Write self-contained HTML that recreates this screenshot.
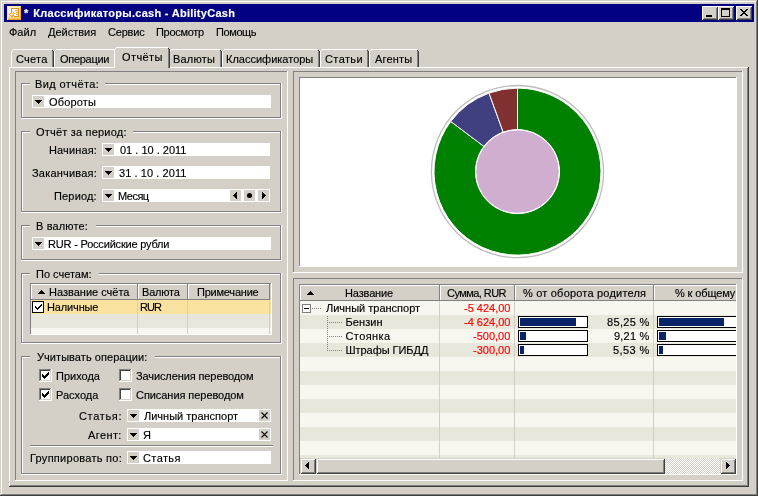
<!DOCTYPE html>
<html><head><meta charset="utf-8"><title>AbilityCash</title><style>
html,body{margin:0;padding:0}
body{width:758px;height:496px;position:relative;overflow:hidden;background:#d4d0c8;font:11px "Liberation Sans",sans-serif;color:#000}
i,div,svg,.t{position:absolute;display:block}
#root{left:0;top:0;width:758px;height:496px;will-change:transform}
.t{white-space:nowrap;line-height:13px;height:13px;-webkit-text-stroke:0.15px currentColor}
.b{font-weight:bold}.w{color:#fff}.r{color:#f00}
.btn{box-sizing:border-box;background:#d4d0c8;box-shadow:inset 1px 1px 0 #fff,inset -1px -1px 0 #404040,inset 2px 2px 0 #d4d0c8,inset -2px -2px 0 #808080}
.sbtn{box-sizing:border-box;background:#d4d0c8;box-shadow:inset 1px 1px 0 #d4d0c8,inset -1px -1px 0 #404040,inset 2px 2px 0 #fff,inset -2px -2px 0 #808080}
.dh{background:repeating-linear-gradient(to right,#808080 0,#808080 1px,transparent 1px,transparent 2px)}
.dv{background:repeating-linear-gradient(to bottom,#808080 0,#808080 1px,transparent 1px,transparent 2px)}
.chk{background:repeating-conic-gradient(#fff 0% 25%,#d4d0c8 0% 50%) 0 0/2px 2px}
</style></head><body>
<div id="root">
<i style="left:1px;top:1px;width:756px;height:1px;background:#fff;"></i>
<i style="left:1px;top:1px;width:1px;height:493px;background:#fff;"></i>
<i style="left:757px;top:0px;width:1px;height:496px;background:#404040;"></i>
<i style="left:0px;top:495px;width:758px;height:1px;background:#404040;"></i>
<i style="left:756px;top:1px;width:1px;height:494px;background:#808080;"></i>
<i style="left:1px;top:494px;width:756px;height:1px;background:#808080;"></i>
<i style="left:4px;top:4px;width:750px;height:18px;background:#000080;"></i>
<svg style="left:7px;top:6px" width="14" height="14" viewBox="0 0 14 14" shape-rendering="crispEdges"><defs><linearGradient id="ig" x1="0" y1="0" x2="0" y2="1"><stop offset="0" stop-color="#fdeab0"/><stop offset=".2" stop-color="#fffaf0"/><stop offset=".7" stop-color="#fdebc8"/><stop offset="1" stop-color="#f5ae30"/></linearGradient></defs><rect width="14" height="14" fill="url(#ig)"/><path d="M0 0h14v1h-13v13h-1z" fill="#ffe88c"/><path d="M14 1v13h-13v-1h12v-12z" fill="#f5a81e"/><rect x="4" y="2" width="8" height="9" fill="#e98c12"/><rect x="5" y="3" width="6" height="7" fill="#fff"/><rect x="8" y="4" width="3" height="1" fill="#eeb04e"/><rect x="9" y="6" width="2" height="1" fill="#eeb04e"/><rect x="9" y="8" width="2" height="1" fill="#eeb04e"/><rect x="5" y="5" width="6" height="1" fill="#fbe6c0"/><rect x="5" y="7" width="6" height="1" fill="#fbe6c0"/><rect x="4" y="7" width="3" height="4" fill="#fbe0a8"/><path d="M2 8h1v1h-1z M3 9h1v1h-1z M4 10h1v1h-1z M5 9h1v1h-1z M6 8h1v1h-1z M7 7h1v1h-1z M6 6h1v1h-1z M3 7h1v1h-1z M5 11h1v-1h1v-1h-1v1h-1z" fill="#f0a020"/></svg>
<div class="btn" style="left:702px;top:6px;width:16px;height:14px;"></div>
<div class="btn" style="left:718px;top:6px;width:16px;height:14px;"></div>
<div class="btn" style="left:736px;top:6px;width:16px;height:14px;"></div>
<i style="left:706px;top:15px;width:6px;height:2px;background:#000;"></i>
<i style="left:721px;top:8px;width:9px;height:2px;background:#000;"></i>
<i style="left:721px;top:10px;width:1px;height:7px;background:#000;"></i>
<i style="left:729px;top:10px;width:1px;height:7px;background:#000;"></i>
<i style="left:721px;top:16px;width:9px;height:1px;background:#000;"></i>
<i style="left:740px;top:9px;width:2px;height:1px;background:#000;"></i>
<i style="left:746px;top:9px;width:2px;height:1px;background:#000;"></i>
<i style="left:741px;top:10px;width:2px;height:1px;background:#000;"></i>
<i style="left:745px;top:10px;width:2px;height:1px;background:#000;"></i>
<i style="left:742px;top:11px;width:2px;height:1px;background:#000;"></i>
<i style="left:744px;top:11px;width:2px;height:1px;background:#000;"></i>
<i style="left:743px;top:12px;width:2px;height:1px;background:#000;"></i>
<i style="left:742px;top:13px;width:2px;height:1px;background:#000;"></i>
<i style="left:744px;top:13px;width:2px;height:1px;background:#000;"></i>
<i style="left:741px;top:14px;width:2px;height:1px;background:#000;"></i>
<i style="left:745px;top:14px;width:2px;height:1px;background:#000;"></i>
<i style="left:740px;top:15px;width:2px;height:1px;background:#000;"></i>
<i style="left:746px;top:15px;width:2px;height:1px;background:#000;"></i>
<i style="left:9px;top:67px;width:739px;height:1px;background:#fff;"></i>
<i style="left:9px;top:67px;width:1px;height:419px;background:#fff;"></i>
<i style="left:747px;top:68px;width:1px;height:418px;background:#808080;"></i>
<i style="left:748px;top:67px;width:1px;height:420px;background:#404040;"></i>
<i style="left:10px;top:485px;width:738px;height:1px;background:#808080;"></i>
<i style="left:9px;top:486px;width:740px;height:1px;background:#404040;"></i>
<i style="left:13px;top:49px;width:39px;height:1px;background:#fff;"></i>
<i style="left:12px;top:50px;width:1px;height:1px;background:#fff;"></i>
<i style="left:11px;top:51px;width:1px;height:16px;background:#fff;"></i>
<i style="left:52px;top:50px;width:1px;height:17px;background:#808080;"></i>
<i style="left:53px;top:51px;width:1px;height:16px;background:#404040;"></i>
<i style="left:52px;top:50px;width:1px;height:1px;background:#404040;"></i>
<i style="left:56px;top:49px;width:58px;height:1px;background:#fff;"></i>
<i style="left:55px;top:50px;width:1px;height:1px;background:#fff;"></i>
<i style="left:54px;top:51px;width:1px;height:16px;background:#fff;"></i>
<i style="left:114px;top:50px;width:1px;height:17px;background:#808080;"></i>
<i style="left:115px;top:51px;width:1px;height:16px;background:#404040;"></i>
<i style="left:114px;top:50px;width:1px;height:1px;background:#404040;"></i>
<i style="left:171px;top:49px;width:49px;height:1px;background:#fff;"></i>
<i style="left:170px;top:50px;width:1px;height:1px;background:#fff;"></i>
<i style="left:169px;top:51px;width:1px;height:16px;background:#fff;"></i>
<i style="left:220px;top:50px;width:1px;height:17px;background:#808080;"></i>
<i style="left:221px;top:51px;width:1px;height:16px;background:#404040;"></i>
<i style="left:220px;top:50px;width:1px;height:1px;background:#404040;"></i>
<i style="left:224px;top:49px;width:94px;height:1px;background:#fff;"></i>
<i style="left:223px;top:50px;width:1px;height:1px;background:#fff;"></i>
<i style="left:222px;top:51px;width:1px;height:16px;background:#fff;"></i>
<i style="left:318px;top:50px;width:1px;height:17px;background:#808080;"></i>
<i style="left:319px;top:51px;width:1px;height:16px;background:#404040;"></i>
<i style="left:318px;top:50px;width:1px;height:1px;background:#404040;"></i>
<i style="left:322px;top:49px;width:45px;height:1px;background:#fff;"></i>
<i style="left:321px;top:50px;width:1px;height:1px;background:#fff;"></i>
<i style="left:320px;top:51px;width:1px;height:16px;background:#fff;"></i>
<i style="left:367px;top:50px;width:1px;height:17px;background:#808080;"></i>
<i style="left:368px;top:51px;width:1px;height:16px;background:#404040;"></i>
<i style="left:367px;top:50px;width:1px;height:1px;background:#404040;"></i>
<i style="left:371px;top:49px;width:46px;height:1px;background:#fff;"></i>
<i style="left:370px;top:50px;width:1px;height:1px;background:#fff;"></i>
<i style="left:369px;top:51px;width:1px;height:16px;background:#fff;"></i>
<i style="left:417px;top:50px;width:1px;height:17px;background:#808080;"></i>
<i style="left:418px;top:51px;width:1px;height:16px;background:#404040;"></i>
<i style="left:417px;top:50px;width:1px;height:1px;background:#404040;"></i>
<i style="left:114px;top:47px;width:56px;height:21px;background:#d4d0c8;"></i>
<i style="left:116px;top:47px;width:52px;height:1px;background:#fff;"></i>
<i style="left:115px;top:48px;width:1px;height:1px;background:#fff;"></i>
<i style="left:114px;top:49px;width:1px;height:19px;background:#fff;"></i>
<i style="left:168px;top:48px;width:1px;height:20px;background:#808080;"></i>
<i style="left:169px;top:49px;width:1px;height:19px;background:#404040;"></i>
<i style="left:168px;top:48px;width:1px;height:1px;background:#404040;"></i>
<i style="left:15px;top:71px;width:273px;height:1px;background:#808080;"></i>
<i style="left:15px;top:71px;width:1px;height:410px;background:#808080;"></i>
<i style="left:15px;top:480px;width:273px;height:1px;background:#fff;"></i>
<i style="left:287px;top:71px;width:1px;height:410px;background:#fff;"></i>
<i style="left:293px;top:71px;width:450px;height:1px;background:#808080;"></i>
<i style="left:293px;top:71px;width:1px;height:202px;background:#808080;"></i>
<i style="left:293px;top:272px;width:450px;height:1px;background:#fff;"></i>
<i style="left:742px;top:71px;width:1px;height:202px;background:#fff;"></i>
<i style="left:293px;top:278px;width:450px;height:1px;background:#808080;"></i>
<i style="left:293px;top:278px;width:1px;height:203px;background:#808080;"></i>
<i style="left:293px;top:480px;width:450px;height:1px;background:#fff;"></i>
<i style="left:742px;top:278px;width:1px;height:203px;background:#fff;"></i>
<i style="left:299px;top:77px;width:438px;height:1px;background:#808080;"></i>
<i style="left:299px;top:77px;width:1px;height:190px;background:#808080;"></i>
<i style="left:299px;top:266px;width:438px;height:1px;background:#fff;"></i>
<i style="left:736px;top:77px;width:1px;height:190px;background:#fff;"></i>
<i style="left:300px;top:78px;width:436px;height:188px;background:#fff;"></i>
<i style="left:299px;top:284px;width:438px;height:1px;background:#808080;"></i>
<i style="left:299px;top:284px;width:1px;height:191px;background:#808080;"></i>
<i style="left:299px;top:474px;width:438px;height:1px;background:#fff;"></i>
<i style="left:736px;top:284px;width:1px;height:191px;background:#fff;"></i>
<i style="left:21px;top:83px;width:9px;height:1px;background:#808080;"></i>
<i style="left:105px;top:83px;width:176px;height:1px;background:#808080;"></i>
<i style="left:22px;top:84px;width:8px;height:1px;background:#fff;"></i>
<i style="left:105px;top:84px;width:175px;height:1px;background:#fff;"></i>
<i style="left:21px;top:83px;width:1px;height:35px;background:#808080;"></i>
<i style="left:22px;top:84px;width:1px;height:33px;background:#fff;"></i>
<i style="left:21px;top:117px;width:260px;height:1px;background:#808080;"></i>
<i style="left:21px;top:118px;width:261px;height:1px;background:#fff;"></i>
<i style="left:280px;top:83px;width:1px;height:35px;background:#808080;"></i>
<i style="left:281px;top:83px;width:1px;height:36px;background:#fff;"></i>
<i style="left:21px;top:131px;width:9px;height:1px;background:#808080;"></i>
<i style="left:133px;top:131px;width:148px;height:1px;background:#808080;"></i>
<i style="left:22px;top:132px;width:8px;height:1px;background:#fff;"></i>
<i style="left:133px;top:132px;width:147px;height:1px;background:#fff;"></i>
<i style="left:21px;top:131px;width:1px;height:81px;background:#808080;"></i>
<i style="left:22px;top:132px;width:1px;height:79px;background:#fff;"></i>
<i style="left:21px;top:211px;width:260px;height:1px;background:#808080;"></i>
<i style="left:21px;top:212px;width:261px;height:1px;background:#fff;"></i>
<i style="left:280px;top:131px;width:1px;height:81px;background:#808080;"></i>
<i style="left:281px;top:131px;width:1px;height:82px;background:#fff;"></i>
<i style="left:21px;top:225px;width:9px;height:1px;background:#808080;"></i>
<i style="left:96px;top:225px;width:185px;height:1px;background:#808080;"></i>
<i style="left:22px;top:226px;width:8px;height:1px;background:#fff;"></i>
<i style="left:96px;top:226px;width:184px;height:1px;background:#fff;"></i>
<i style="left:21px;top:225px;width:1px;height:35px;background:#808080;"></i>
<i style="left:22px;top:226px;width:1px;height:33px;background:#fff;"></i>
<i style="left:21px;top:259px;width:260px;height:1px;background:#808080;"></i>
<i style="left:21px;top:260px;width:261px;height:1px;background:#fff;"></i>
<i style="left:280px;top:225px;width:1px;height:35px;background:#808080;"></i>
<i style="left:281px;top:225px;width:1px;height:36px;background:#fff;"></i>
<i style="left:21px;top:273px;width:9px;height:1px;background:#808080;"></i>
<i style="left:99px;top:273px;width:182px;height:1px;background:#808080;"></i>
<i style="left:22px;top:274px;width:8px;height:1px;background:#fff;"></i>
<i style="left:99px;top:274px;width:181px;height:1px;background:#fff;"></i>
<i style="left:21px;top:273px;width:1px;height:70px;background:#808080;"></i>
<i style="left:22px;top:274px;width:1px;height:68px;background:#fff;"></i>
<i style="left:21px;top:342px;width:260px;height:1px;background:#808080;"></i>
<i style="left:21px;top:343px;width:261px;height:1px;background:#fff;"></i>
<i style="left:280px;top:273px;width:1px;height:70px;background:#808080;"></i>
<i style="left:281px;top:273px;width:1px;height:71px;background:#fff;"></i>
<i style="left:21px;top:356px;width:9px;height:1px;background:#808080;"></i>
<i style="left:155px;top:356px;width:126px;height:1px;background:#808080;"></i>
<i style="left:22px;top:357px;width:8px;height:1px;background:#fff;"></i>
<i style="left:155px;top:357px;width:125px;height:1px;background:#fff;"></i>
<i style="left:21px;top:356px;width:1px;height:118px;background:#808080;"></i>
<i style="left:22px;top:357px;width:1px;height:116px;background:#fff;"></i>
<i style="left:21px;top:473px;width:260px;height:1px;background:#808080;"></i>
<i style="left:21px;top:474px;width:261px;height:1px;background:#fff;"></i>
<i style="left:280px;top:356px;width:1px;height:118px;background:#808080;"></i>
<i style="left:281px;top:356px;width:1px;height:119px;background:#fff;"></i>
<i style="left:32px;top:95px;width:239px;height:13px;background:#fff;"></i>
<i style="left:33px;top:96px;width:11px;height:11px;background:#d4d0c8;"></i>
<i style="left:35px;top:100px;width:7px;height:1px;background:#000;"></i>
<i style="left:36px;top:101px;width:5px;height:1px;background:#000;"></i>
<i style="left:37px;top:102px;width:3px;height:1px;background:#000;"></i>
<i style="left:38px;top:103px;width:1px;height:1px;background:#000;"></i>
<i style="left:102px;top:143px;width:168px;height:13px;background:#fff;"></i>
<i style="left:103px;top:144px;width:11px;height:11px;background:#d4d0c8;"></i>
<i style="left:105px;top:148px;width:7px;height:1px;background:#000;"></i>
<i style="left:106px;top:149px;width:5px;height:1px;background:#000;"></i>
<i style="left:107px;top:150px;width:3px;height:1px;background:#000;"></i>
<i style="left:108px;top:151px;width:1px;height:1px;background:#000;"></i>
<i style="left:102px;top:166px;width:168px;height:13px;background:#fff;"></i>
<i style="left:103px;top:167px;width:11px;height:11px;background:#d4d0c8;"></i>
<i style="left:105px;top:171px;width:7px;height:1px;background:#000;"></i>
<i style="left:106px;top:172px;width:5px;height:1px;background:#000;"></i>
<i style="left:107px;top:173px;width:3px;height:1px;background:#000;"></i>
<i style="left:108px;top:174px;width:1px;height:1px;background:#000;"></i>
<i style="left:102px;top:189px;width:168px;height:13px;background:#fff;"></i>
<i style="left:103px;top:190px;width:11px;height:11px;background:#d4d0c8;"></i>
<i style="left:105px;top:194px;width:7px;height:1px;background:#000;"></i>
<i style="left:106px;top:195px;width:5px;height:1px;background:#000;"></i>
<i style="left:107px;top:196px;width:3px;height:1px;background:#000;"></i>
<i style="left:108px;top:197px;width:1px;height:1px;background:#000;"></i>
<i style="left:32px;top:237px;width:239px;height:13px;background:#fff;"></i>
<i style="left:33px;top:238px;width:11px;height:11px;background:#d4d0c8;"></i>
<i style="left:35px;top:242px;width:7px;height:1px;background:#000;"></i>
<i style="left:36px;top:243px;width:5px;height:1px;background:#000;"></i>
<i style="left:37px;top:244px;width:3px;height:1px;background:#000;"></i>
<i style="left:38px;top:245px;width:1px;height:1px;background:#000;"></i>
<i style="left:127px;top:409px;width:144px;height:13px;background:#fff;"></i>
<i style="left:128px;top:410px;width:11px;height:11px;background:#d4d0c8;"></i>
<i style="left:130px;top:414px;width:7px;height:1px;background:#000;"></i>
<i style="left:131px;top:415px;width:5px;height:1px;background:#000;"></i>
<i style="left:132px;top:416px;width:3px;height:1px;background:#000;"></i>
<i style="left:133px;top:417px;width:1px;height:1px;background:#000;"></i>
<i style="left:127px;top:428px;width:144px;height:13px;background:#fff;"></i>
<i style="left:128px;top:429px;width:11px;height:11px;background:#d4d0c8;"></i>
<i style="left:130px;top:433px;width:7px;height:1px;background:#000;"></i>
<i style="left:131px;top:434px;width:5px;height:1px;background:#000;"></i>
<i style="left:132px;top:435px;width:3px;height:1px;background:#000;"></i>
<i style="left:133px;top:436px;width:1px;height:1px;background:#000;"></i>
<i style="left:127px;top:451px;width:144px;height:13px;background:#fff;"></i>
<i style="left:128px;top:452px;width:11px;height:11px;background:#d4d0c8;"></i>
<i style="left:130px;top:456px;width:7px;height:1px;background:#000;"></i>
<i style="left:131px;top:457px;width:5px;height:1px;background:#000;"></i>
<i style="left:132px;top:458px;width:3px;height:1px;background:#000;"></i>
<i style="left:133px;top:459px;width:1px;height:1px;background:#000;"></i>
<i style="left:230px;top:190px;width:11px;height:11px;background:#d4d0c8;"></i>
<i style="left:244px;top:190px;width:11px;height:11px;background:#d4d0c8;"></i>
<i style="left:258px;top:190px;width:11px;height:11px;background:#d4d0c8;"></i>
<i style="left:236px;top:192px;width:1px;height:7px;background:#000;"></i>
<i style="left:235px;top:193px;width:1px;height:5px;background:#000;"></i>
<i style="left:234px;top:194px;width:1px;height:3px;background:#000;"></i>
<i style="left:233px;top:195px;width:1px;height:1px;background:#000;"></i>
<i style="left:262px;top:192px;width:1px;height:7px;background:#000;"></i>
<i style="left:263px;top:193px;width:1px;height:5px;background:#000;"></i>
<i style="left:264px;top:194px;width:1px;height:3px;background:#000;"></i>
<i style="left:265px;top:195px;width:1px;height:1px;background:#000;"></i>
<i style="left:247px;top:193px;width:5px;height:5px;background:#000;border-radius:50%"></i>
<i style="left:259px;top:410px;width:11px;height:11px;background:#d4d0c8;"></i>
<svg style="left:261px;top:412px" width="7" height="7" viewBox="0 0 7 7"><path d="M.5 .5L6.5 6.5M6.5 .5L.5 6.5" stroke="#000" stroke-width="1.1" fill="none"/></svg>
<i style="left:259px;top:429px;width:11px;height:11px;background:#d4d0c8;"></i>
<svg style="left:261px;top:431px" width="7" height="7" viewBox="0 0 7 7"><path d="M.5 .5L6.5 6.5M6.5 .5L.5 6.5" stroke="#000" stroke-width="1.1" fill="none"/></svg>
<i style="left:30px;top:445px;width:243px;height:1px;background:#808080;"></i>
<i style="left:30px;top:446px;width:243px;height:1px;background:#fff;"></i>
<i style="left:30px;top:283px;width:242px;height:1px;background:#808080;"></i>
<i style="left:30px;top:283px;width:1px;height:52px;background:#808080;"></i>
<i style="left:30px;top:334px;width:242px;height:1px;background:#fff;"></i>
<i style="left:271px;top:283px;width:1px;height:52px;background:#fff;"></i>
<i style="left:31px;top:284px;width:240px;height:16px;background:#d4d0c8;"></i>
<i style="left:31px;top:284px;width:107px;height:1px;background:#fff;"></i>
<i style="left:31px;top:284px;width:1px;height:15px;background:#fff;"></i>
<i style="left:137px;top:284px;width:1px;height:16px;background:#808080;"></i>
<i style="left:31px;top:299px;width:107px;height:1px;background:#808080;"></i>
<i style="left:138px;top:284px;width:50px;height:1px;background:#fff;"></i>
<i style="left:138px;top:284px;width:1px;height:15px;background:#fff;"></i>
<i style="left:187px;top:284px;width:1px;height:16px;background:#808080;"></i>
<i style="left:138px;top:299px;width:50px;height:1px;background:#808080;"></i>
<i style="left:188px;top:284px;width:82px;height:1px;background:#fff;"></i>
<i style="left:188px;top:284px;width:1px;height:15px;background:#fff;"></i>
<i style="left:269px;top:284px;width:1px;height:16px;background:#808080;"></i>
<i style="left:188px;top:299px;width:82px;height:1px;background:#808080;"></i>
<i style="left:31px;top:300px;width:240px;height:14px;background:#fae3a0;"></i>
<i style="left:31px;top:314px;width:240px;height:14px;background:#e7e7dc;"></i>
<i style="left:31px;top:328px;width:240px;height:6px;background:#f7f7ef;"></i>
<i style="left:137px;top:314px;width:1px;height:20px;background:#d2d0c4;"></i>
<i style="left:187px;top:314px;width:1px;height:20px;background:#d2d0c4;"></i>
<i style="left:269px;top:314px;width:1px;height:20px;background:#d2d0c4;"></i>
<i style="left:137px;top:300px;width:1px;height:14px;background:#e6cf94;"></i>
<i style="left:187px;top:300px;width:1px;height:14px;background:#e6cf94;"></i>
<i style="left:269px;top:300px;width:1px;height:14px;background:#e6cf94;"></i>
<i style="left:41px;top:290px;width:1px;height:1px;background:#000;"></i>
<i style="left:40px;top:291px;width:3px;height:1px;background:#000;"></i>
<i style="left:39px;top:292px;width:5px;height:1px;background:#000;"></i>
<i style="left:38px;top:293px;width:7px;height:1px;background:#000;"></i>
<i style="left:32px;top:301px;width:12px;height:12px;background:#000;"></i>
<i style="left:33px;top:302px;width:10px;height:10px;background:#fff;"></i>
<i style="left:35px;top:306px;width:1px;height:2px;background:#000;"></i>
<i style="left:36px;top:307px;width:1px;height:2px;background:#000;"></i>
<i style="left:37px;top:308px;width:1px;height:2px;background:#000;"></i>
<i style="left:38px;top:307px;width:1px;height:2px;background:#000;"></i>
<i style="left:39px;top:306px;width:1px;height:2px;background:#000;"></i>
<i style="left:40px;top:305px;width:1px;height:2px;background:#000;"></i>
<i style="left:41px;top:304px;width:1px;height:2px;background:#000;"></i>
<i style="left:39px;top:369px;width:13px;height:13px;background:#fff;"></i>
<i style="left:39px;top:369px;width:12px;height:1px;background:#808080;"></i>
<i style="left:39px;top:369px;width:1px;height:12px;background:#808080;"></i>
<i style="left:40px;top:370px;width:10px;height:1px;background:#404040;"></i>
<i style="left:40px;top:370px;width:1px;height:10px;background:#404040;"></i>
<i style="left:40px;top:380px;width:11px;height:1px;background:#d4d0c8;"></i>
<i style="left:50px;top:370px;width:1px;height:11px;background:#d4d0c8;"></i>
<i style="left:42px;top:374px;width:1px;height:3px;background:#000;"></i>
<i style="left:43px;top:375px;width:1px;height:3px;background:#000;"></i>
<i style="left:44px;top:376px;width:1px;height:3px;background:#000;"></i>
<i style="left:45px;top:375px;width:1px;height:3px;background:#000;"></i>
<i style="left:46px;top:374px;width:1px;height:3px;background:#000;"></i>
<i style="left:47px;top:373px;width:1px;height:3px;background:#000;"></i>
<i style="left:48px;top:372px;width:1px;height:3px;background:#000;"></i>
<i style="left:39px;top:388px;width:13px;height:13px;background:#fff;"></i>
<i style="left:39px;top:388px;width:12px;height:1px;background:#808080;"></i>
<i style="left:39px;top:388px;width:1px;height:12px;background:#808080;"></i>
<i style="left:40px;top:389px;width:10px;height:1px;background:#404040;"></i>
<i style="left:40px;top:389px;width:1px;height:10px;background:#404040;"></i>
<i style="left:40px;top:399px;width:11px;height:1px;background:#d4d0c8;"></i>
<i style="left:50px;top:389px;width:1px;height:11px;background:#d4d0c8;"></i>
<i style="left:42px;top:393px;width:1px;height:3px;background:#000;"></i>
<i style="left:43px;top:394px;width:1px;height:3px;background:#000;"></i>
<i style="left:44px;top:395px;width:1px;height:3px;background:#000;"></i>
<i style="left:45px;top:394px;width:1px;height:3px;background:#000;"></i>
<i style="left:46px;top:393px;width:1px;height:3px;background:#000;"></i>
<i style="left:47px;top:392px;width:1px;height:3px;background:#000;"></i>
<i style="left:48px;top:391px;width:1px;height:3px;background:#000;"></i>
<i style="left:119px;top:369px;width:13px;height:13px;background:#fff;"></i>
<i style="left:119px;top:369px;width:12px;height:1px;background:#808080;"></i>
<i style="left:119px;top:369px;width:1px;height:12px;background:#808080;"></i>
<i style="left:120px;top:370px;width:10px;height:1px;background:#404040;"></i>
<i style="left:120px;top:370px;width:1px;height:10px;background:#404040;"></i>
<i style="left:120px;top:380px;width:11px;height:1px;background:#d4d0c8;"></i>
<i style="left:130px;top:370px;width:1px;height:11px;background:#d4d0c8;"></i>
<i style="left:119px;top:388px;width:13px;height:13px;background:#fff;"></i>
<i style="left:119px;top:388px;width:12px;height:1px;background:#808080;"></i>
<i style="left:119px;top:388px;width:1px;height:12px;background:#808080;"></i>
<i style="left:120px;top:389px;width:10px;height:1px;background:#404040;"></i>
<i style="left:120px;top:389px;width:1px;height:10px;background:#404040;"></i>
<i style="left:120px;top:399px;width:11px;height:1px;background:#d4d0c8;"></i>
<i style="left:130px;top:389px;width:1px;height:11px;background:#d4d0c8;"></i>
<i style="left:300px;top:285px;width:436px;height:16px;background:#d4d0c8;"></i>
<i style="left:300px;top:285px;width:140px;height:1px;background:#fff;"></i>
<i style="left:300px;top:285px;width:1px;height:15px;background:#fff;"></i>
<i style="left:439px;top:285px;width:1px;height:16px;background:#808080;"></i>
<i style="left:300px;top:300px;width:140px;height:1px;background:#808080;"></i>
<i style="left:440px;top:285px;width:75px;height:1px;background:#fff;"></i>
<i style="left:440px;top:285px;width:1px;height:15px;background:#fff;"></i>
<i style="left:514px;top:285px;width:1px;height:16px;background:#808080;"></i>
<i style="left:440px;top:300px;width:75px;height:1px;background:#808080;"></i>
<i style="left:515px;top:285px;width:139px;height:1px;background:#fff;"></i>
<i style="left:515px;top:285px;width:1px;height:15px;background:#fff;"></i>
<i style="left:653px;top:285px;width:1px;height:16px;background:#808080;"></i>
<i style="left:515px;top:300px;width:139px;height:1px;background:#808080;"></i>
<i style="left:654px;top:285px;width:82px;height:1px;background:#fff;"></i>
<i style="left:654px;top:285px;width:1px;height:15px;background:#fff;"></i>
<i style="left:735px;top:285px;width:1px;height:16px;background:#808080;"></i>
<i style="left:654px;top:300px;width:82px;height:1px;background:#808080;"></i>
<i style="left:735px;top:285px;width:1px;height:16px;background:#d4d0c8;"></i>
<i style="left:735px;top:285px;width:1px;height:1px;background:#fff;"></i>
<i style="left:735px;top:300px;width:1px;height:1px;background:#808080;"></i>
<i style="left:300px;top:301px;width:436px;height:14px;background:#f7f7ef;"></i>
<i style="left:300px;top:315px;width:436px;height:14px;background:#e7e7dc;"></i>
<i style="left:300px;top:329px;width:436px;height:14px;background:#f7f7ef;"></i>
<i style="left:300px;top:343px;width:436px;height:14px;background:#e7e7dc;"></i>
<i style="left:300px;top:357px;width:436px;height:14px;background:#f7f7ef;"></i>
<i style="left:300px;top:371px;width:436px;height:14px;background:#e7e7dc;"></i>
<i style="left:300px;top:385px;width:436px;height:14px;background:#f7f7ef;"></i>
<i style="left:300px;top:399px;width:436px;height:14px;background:#e7e7dc;"></i>
<i style="left:300px;top:413px;width:436px;height:14px;background:#f7f7ef;"></i>
<i style="left:300px;top:427px;width:436px;height:14px;background:#e7e7dc;"></i>
<i style="left:300px;top:441px;width:436px;height:14px;background:#f7f7ef;"></i>
<i style="left:300px;top:455px;width:436px;height:3px;background:#e7e7dc;"></i>
<i style="left:439px;top:301px;width:1px;height:157px;background:#d2d0c4;"></i>
<i style="left:514px;top:301px;width:1px;height:157px;background:#d2d0c4;"></i>
<i style="left:653px;top:301px;width:1px;height:157px;background:#d2d0c4;"></i>
<i style="left:310px;top:291px;width:1px;height:1px;background:#000;"></i>
<i style="left:309px;top:292px;width:3px;height:1px;background:#000;"></i>
<i style="left:308px;top:293px;width:5px;height:1px;background:#000;"></i>
<i style="left:307px;top:294px;width:7px;height:1px;background:#000;"></i>
<i style="left:302px;top:304px;width:9px;height:9px;background:#808080;"></i>
<i style="left:303px;top:305px;width:7px;height:7px;background:#fff;"></i>
<i style="left:304px;top:308px;width:5px;height:1px;background:#000;"></i>
<i class="dh" style="left:312px;top:308px;width:10px;height:1px"></i>
<i class="dv" style="left:327px;top:316px;width:1px;height:35px"></i>
<i class="dh" style="left:329px;top:322px;width:14px;height:1px"></i>
<i class="dh" style="left:329px;top:336px;width:14px;height:1px"></i>
<i class="dh" style="left:329px;top:350px;width:14px;height:1px"></i>
<i style="left:518px;top:316px;width:70px;height:12px;background:#000;"></i>
<i style="left:519px;top:317px;width:68px;height:10px;background:#fff;"></i>
<i style="left:520px;top:318px;width:56px;height:8px;background:#0a246a;"></i>
<i style="left:657px;top:316px;width:79px;height:12px;background:#000;"></i>
<i style="left:658px;top:317px;width:78px;height:10px;background:#fff;"></i>
<i style="left:659px;top:318px;width:65px;height:8px;background:#0a246a;"></i>
<i style="left:518px;top:330px;width:70px;height:12px;background:#000;"></i>
<i style="left:519px;top:331px;width:68px;height:10px;background:#fff;"></i>
<i style="left:520px;top:332px;width:6px;height:8px;background:#0a246a;"></i>
<i style="left:657px;top:330px;width:79px;height:12px;background:#000;"></i>
<i style="left:658px;top:331px;width:78px;height:10px;background:#fff;"></i>
<i style="left:659px;top:332px;width:7px;height:8px;background:#0a246a;"></i>
<i style="left:518px;top:344px;width:70px;height:12px;background:#000;"></i>
<i style="left:519px;top:345px;width:68px;height:10px;background:#fff;"></i>
<i style="left:520px;top:346px;width:4px;height:8px;background:#0a246a;"></i>
<i style="left:657px;top:344px;width:79px;height:12px;background:#000;"></i>
<i style="left:658px;top:345px;width:78px;height:10px;background:#fff;"></i>
<i style="left:659px;top:346px;width:4px;height:8px;background:#0a246a;"></i>
<i style="left:300px;top:458px;width:436px;height:16px;background:#d4d0c8;"></i>
<i class="chk" style="left:665px;top:458px;width:55px;height:16px"></i>
<div class="sbtn" style="left:300px;top:458px;width:16px;height:16px;"></div>
<div class="sbtn" style="left:720px;top:458px;width:16px;height:16px;"></div>
<div class="sbtn" style="left:316px;top:458px;width:349px;height:16px;"></div>
<i style="left:308px;top:462px;width:1px;height:7px;background:#000;"></i>
<i style="left:307px;top:463px;width:1px;height:5px;background:#000;"></i>
<i style="left:306px;top:464px;width:1px;height:3px;background:#000;"></i>
<i style="left:305px;top:465px;width:1px;height:1px;background:#000;"></i>
<i style="left:726px;top:462px;width:1px;height:7px;background:#000;"></i>
<i style="left:727px;top:463px;width:1px;height:5px;background:#000;"></i>
<i style="left:728px;top:464px;width:1px;height:3px;background:#000;"></i>
<i style="left:729px;top:465px;width:1px;height:1px;background:#000;"></i>
<svg style="left:0;top:0" width="758" height="496" viewBox="0 0 758 496"><circle cx="517.5" cy="171.6" r="86.1" fill="#fff" stroke="#bdbdbd" stroke-width="1.3"/><path d="M517.50,88.10A83.5,83.5 0 1 1 450.73,121.46L483.91,146.38A42,42 0 1 0 517.50,129.60Z" fill="#008000" stroke="#fff" stroke-width="1"/><path d="M450.73,121.46A83.5,83.5 0 0 1 489.02,93.11L503.17,132.12A42,42 0 0 0 483.91,146.38Z" fill="#404080" stroke="#fff" stroke-width="1"/><path d="M489.02,93.11A83.5,83.5 0 0 1 517.50,88.10L517.50,129.60A42,42 0 0 0 503.17,132.12Z" fill="#803030" stroke="#fff" stroke-width="1"/><circle cx="517.5" cy="171.6" r="41.7" fill="#d0aed0" stroke="#fff" stroke-width="1"/></svg>
<span class="t b w" style="left:24px;top:7px;letter-spacing:0.000px">*</span>
<span class="t b w" style="left:33.3px;top:7px;letter-spacing:0.272px">Классификаторы.cash - AbilityCash</span>
<span class="t " style="left:9px;top:26px;letter-spacing:0.000px">Файл</span>
<span class="t " style="left:48px;top:26px;letter-spacing:0.000px">Действия</span>
<span class="t " style="left:108px;top:26px;letter-spacing:-0.200px">Сервис</span>
<span class="t " style="left:156px;top:26px;letter-spacing:-0.286px">Просмотр</span>
<span class="t " style="left:216px;top:26px;letter-spacing:-0.400px">Помощь</span>
<span class="t " style="left:16px;top:53px;letter-spacing:0.250px">Счета</span>
<span class="t " style="left:60px;top:53px;letter-spacing:-0.286px">Операции</span>
<span class="t " style="left:122px;top:51px;letter-spacing:0.400px">Отчёты</span>
<span class="t " style="left:173px;top:53px;letter-spacing:0.200px">Валюты</span>
<span class="t " style="left:226px;top:53px;letter-spacing:0.000px">Классификаторы</span>
<span class="t " style="left:325px;top:53px;letter-spacing:0.400px">Статьи</span>
<span class="t " style="left:375px;top:53px;letter-spacing:0.200px">Агенты</span>
<span class="t " style="left:35px;top:78px;letter-spacing:0.400px">Вид отчёта:</span>
<span class="t " style="left:36px;top:126px;letter-spacing:0.200px">Отчёт за период:</span>
<span class="t " style="left:36px;top:220px;letter-spacing:0.125px">В валюте:</span>
<span class="t " style="left:36px;top:268px;letter-spacing:0.000px">По счетам:</span>
<span class="t " style="left:37px;top:351px;letter-spacing:0.056px">Учитывать операции:</span>
<span class="t " style="left:49px;top:96px;letter-spacing:0.167px">Обороты</span>
<span class="t " style="left:120px;top:144px;letter-spacing:0.000px">01 . 10 . 2011</span>
<span class="t " style="left:119px;top:167px;letter-spacing:0.077px">31 . 10 . 2011</span>
<span class="t " style="left:118px;top:190px;letter-spacing:-0.500px">Месяц</span>
<span class="t " style="left:48px;top:238px;letter-spacing:-0.190px">RUR - Российские рубли</span>
<span class="t " style="left:49px;top:144px;letter-spacing:0.143px">Начиная:</span>
<span class="t " style="left:32px;top:167px;letter-spacing:0.200px">Заканчивая:</span>
<span class="t " style="left:54px;top:190px;letter-spacing:0.167px">Период:</span>
<span class="t " style="left:49px;top:286px;letter-spacing:0.000px">Название счёта</span>
<span class="t " style="left:142px;top:286px;letter-spacing:-0.200px">Валюта</span>
<span class="t " style="left:197px;top:286px;letter-spacing:-0.222px">Примечание</span>
<span class="t " style="left:47px;top:301px;letter-spacing:-0.143px">Наличные</span>
<span class="t " style="left:140px;top:301px;letter-spacing:-1.000px">RUR</span>
<span class="t " style="left:56px;top:370px;letter-spacing:0.000px">Прихода</span>
<span class="t " style="left:56px;top:389px;letter-spacing:0.000px">Расхода</span>
<span class="t " style="left:136px;top:370px;letter-spacing:-0.105px">Зачисления переводом</span>
<span class="t " style="left:136px;top:389px;letter-spacing:-0.059px">Списания переводом</span>
<span class="t " style="left:79px;top:410px;letter-spacing:0.667px">Статья:</span>
<span class="t " style="left:88px;top:429px;letter-spacing:0.400px">Агент:</span>
<span class="t " style="left:30px;top:452px;letter-spacing:0.267px">Группировать по:</span>
<span class="t " style="left:144px;top:410px;letter-spacing:0.000px">Личный транспорт</span>
<span class="t " style="left:143px;top:429px;letter-spacing:0.000px">Я</span>
<span class="t " style="left:143px;top:452px;letter-spacing:0.400px">Статья</span>
<span class="t " style="left:345px;top:287px;letter-spacing:-0.143px">Название</span>
<span class="t " style="left:447px;top:287px;letter-spacing:-0.556px">Сумма, RUR</span>
<span class="t " style="left:523px;top:287px;letter-spacing:0.200px">% от оборота родителя</span>
<span class="t " style="left:675px;top:287px;letter-spacing:-0.111px">% к общему</span>
<span class="t " style="left:326px;top:302px;letter-spacing:0.000px">Личный транспорт</span>
<span class="t " style="left:345.5px;top:316px;letter-spacing:0.100px">Бензин</span>
<span class="t " style="left:345.5px;top:330px;letter-spacing:0.417px">Стоянка</span>
<span class="t " style="left:345.5px;top:344px;letter-spacing:-0.045px">Штрафы ГИБДД</span>
<span class="t r" style="left:464px;top:302px;letter-spacing:0.000px">-5 424,00</span>
<span class="t r" style="left:464px;top:316px;letter-spacing:0.000px">-4 624,00</span>
<span class="t r" style="left:473px;top:330px;letter-spacing:0.000px">-500,00</span>
<span class="t r" style="left:473px;top:344px;letter-spacing:0.000px">-300,00</span>
<span class="t " style="left:607px;top:316px;letter-spacing:0.333px">85,25 %</span>
<span class="t " style="left:614px;top:330px;letter-spacing:0.200px">9,21 %</span>
<span class="t " style="left:613px;top:344px;letter-spacing:0.400px">5,53 %</span>
</div></body></html>
